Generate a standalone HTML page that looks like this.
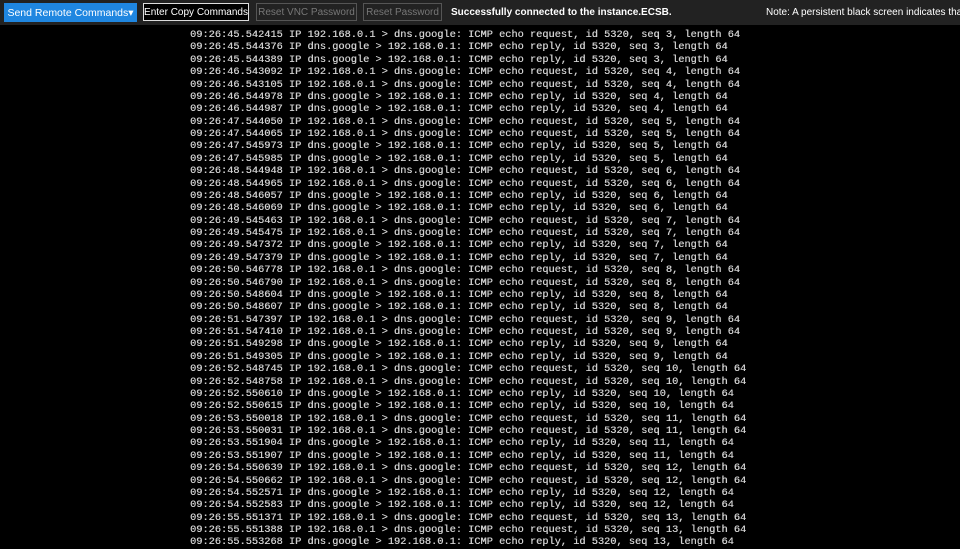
<!DOCTYPE html>
<html><head><meta charset="utf-8"><style>
html,body{margin:0;padding:0;width:960px;height:540px;overflow:hidden;background:#000;}
.bar{position:absolute;left:0;top:0;width:960px;height:25px;background:#222;font-family:"Liberation Sans",sans-serif;font-size:10px;white-space:nowrap;}
.b{position:absolute;top:3px;height:18px;box-sizing:border-box;line-height:18px;text-align:center;font-size:10px;}
.b1{left:4px;width:133px;background:#1f86e0;color:#fff;border:1px solid #1f86e0;top:3px;height:19px;line-height:18px;font-size:10.5px;}
.b2{left:143px;width:106px;background:#000;color:#fff;border:1px solid #ddd;}
.b3{left:256px;width:101px;background:#222;color:#777;border:1px solid #555;}
.b4{left:363px;width:79px;background:#222;color:#777;border:1px solid #555;}
.t{position:absolute;top:7px;color:#fff;font-size:10px;line-height:12px;}
pre{position:absolute;left:190px;top:29px;margin:0;font-family:"Liberation Mono",monospace;font-size:10.3px;line-height:12.38px;color:#cfcfcf;text-shadow:0.3px 0 0 #cfcfcf;}
</style></head><body>
<div class="bar">
<div class="b b1">Send Remote Commands▾</div>
<div class="b b2">Enter Copy Commands</div>
<div class="b b3">Reset VNC Password</div>
<div class="b b4">Reset Password</div>
<div class="t" style="left:451px;font-weight:bold">Successfully connected to the instance.ECSB.</div>
<div class="t" style="left:766px">Note: A persistent black screen indicates that the</div>
</div>
<pre>09:26:45.542415 IP 192.168.0.1 &gt; dns.google: ICMP echo request, id 5320, seq 3, length 64
09:26:45.544376 IP dns.google &gt; 192.168.0.1: ICMP echo reply, id 5320, seq 3, length 64
09:26:45.544389 IP dns.google &gt; 192.168.0.1: ICMP echo reply, id 5320, seq 3, length 64
09:26:46.543092 IP 192.168.0.1 &gt; dns.google: ICMP echo request, id 5320, seq 4, length 64
09:26:46.543105 IP 192.168.0.1 &gt; dns.google: ICMP echo request, id 5320, seq 4, length 64
09:26:46.544978 IP dns.google &gt; 192.168.0.1: ICMP echo reply, id 5320, seq 4, length 64
09:26:46.544987 IP dns.google &gt; 192.168.0.1: ICMP echo reply, id 5320, seq 4, length 64
09:26:47.544050 IP 192.168.0.1 &gt; dns.google: ICMP echo request, id 5320, seq 5, length 64
09:26:47.544065 IP 192.168.0.1 &gt; dns.google: ICMP echo request, id 5320, seq 5, length 64
09:26:47.545973 IP dns.google &gt; 192.168.0.1: ICMP echo reply, id 5320, seq 5, length 64
09:26:47.545985 IP dns.google &gt; 192.168.0.1: ICMP echo reply, id 5320, seq 5, length 64
09:26:48.544948 IP 192.168.0.1 &gt; dns.google: ICMP echo request, id 5320, seq 6, length 64
09:26:48.544965 IP 192.168.0.1 &gt; dns.google: ICMP echo request, id 5320, seq 6, length 64
09:26:48.546057 IP dns.google &gt; 192.168.0.1: ICMP echo reply, id 5320, seq 6, length 64
09:26:48.546069 IP dns.google &gt; 192.168.0.1: ICMP echo reply, id 5320, seq 6, length 64
09:26:49.545463 IP 192.168.0.1 &gt; dns.google: ICMP echo request, id 5320, seq 7, length 64
09:26:49.545475 IP 192.168.0.1 &gt; dns.google: ICMP echo request, id 5320, seq 7, length 64
09:26:49.547372 IP dns.google &gt; 192.168.0.1: ICMP echo reply, id 5320, seq 7, length 64
09:26:49.547379 IP dns.google &gt; 192.168.0.1: ICMP echo reply, id 5320, seq 7, length 64
09:26:50.546778 IP 192.168.0.1 &gt; dns.google: ICMP echo request, id 5320, seq 8, length 64
09:26:50.546790 IP 192.168.0.1 &gt; dns.google: ICMP echo request, id 5320, seq 8, length 64
09:26:50.548604 IP dns.google &gt; 192.168.0.1: ICMP echo reply, id 5320, seq 8, length 64
09:26:50.548607 IP dns.google &gt; 192.168.0.1: ICMP echo reply, id 5320, seq 8, length 64
09:26:51.547397 IP 192.168.0.1 &gt; dns.google: ICMP echo request, id 5320, seq 9, length 64
09:26:51.547410 IP 192.168.0.1 &gt; dns.google: ICMP echo request, id 5320, seq 9, length 64
09:26:51.549298 IP dns.google &gt; 192.168.0.1: ICMP echo reply, id 5320, seq 9, length 64
09:26:51.549305 IP dns.google &gt; 192.168.0.1: ICMP echo reply, id 5320, seq 9, length 64
09:26:52.548745 IP 192.168.0.1 &gt; dns.google: ICMP echo request, id 5320, seq 10, length 64
09:26:52.548758 IP 192.168.0.1 &gt; dns.google: ICMP echo request, id 5320, seq 10, length 64
09:26:52.550610 IP dns.google &gt; 192.168.0.1: ICMP echo reply, id 5320, seq 10, length 64
09:26:52.550615 IP dns.google &gt; 192.168.0.1: ICMP echo reply, id 5320, seq 10, length 64
09:26:53.550018 IP 192.168.0.1 &gt; dns.google: ICMP echo request, id 5320, seq 11, length 64
09:26:53.550031 IP 192.168.0.1 &gt; dns.google: ICMP echo request, id 5320, seq 11, length 64
09:26:53.551904 IP dns.google &gt; 192.168.0.1: ICMP echo reply, id 5320, seq 11, length 64
09:26:53.551907 IP dns.google &gt; 192.168.0.1: ICMP echo reply, id 5320, seq 11, length 64
09:26:54.550639 IP 192.168.0.1 &gt; dns.google: ICMP echo request, id 5320, seq 12, length 64
09:26:54.550662 IP 192.168.0.1 &gt; dns.google: ICMP echo request, id 5320, seq 12, length 64
09:26:54.552571 IP dns.google &gt; 192.168.0.1: ICMP echo reply, id 5320, seq 12, length 64
09:26:54.552583 IP dns.google &gt; 192.168.0.1: ICMP echo reply, id 5320, seq 12, length 64
09:26:55.551371 IP 192.168.0.1 &gt; dns.google: ICMP echo request, id 5320, seq 13, length 64
09:26:55.551388 IP 192.168.0.1 &gt; dns.google: ICMP echo request, id 5320, seq 13, length 64
09:26:55.553268 IP dns.google &gt; 192.168.0.1: ICMP echo reply, id 5320, seq 13, length 64</pre>
</body></html>
